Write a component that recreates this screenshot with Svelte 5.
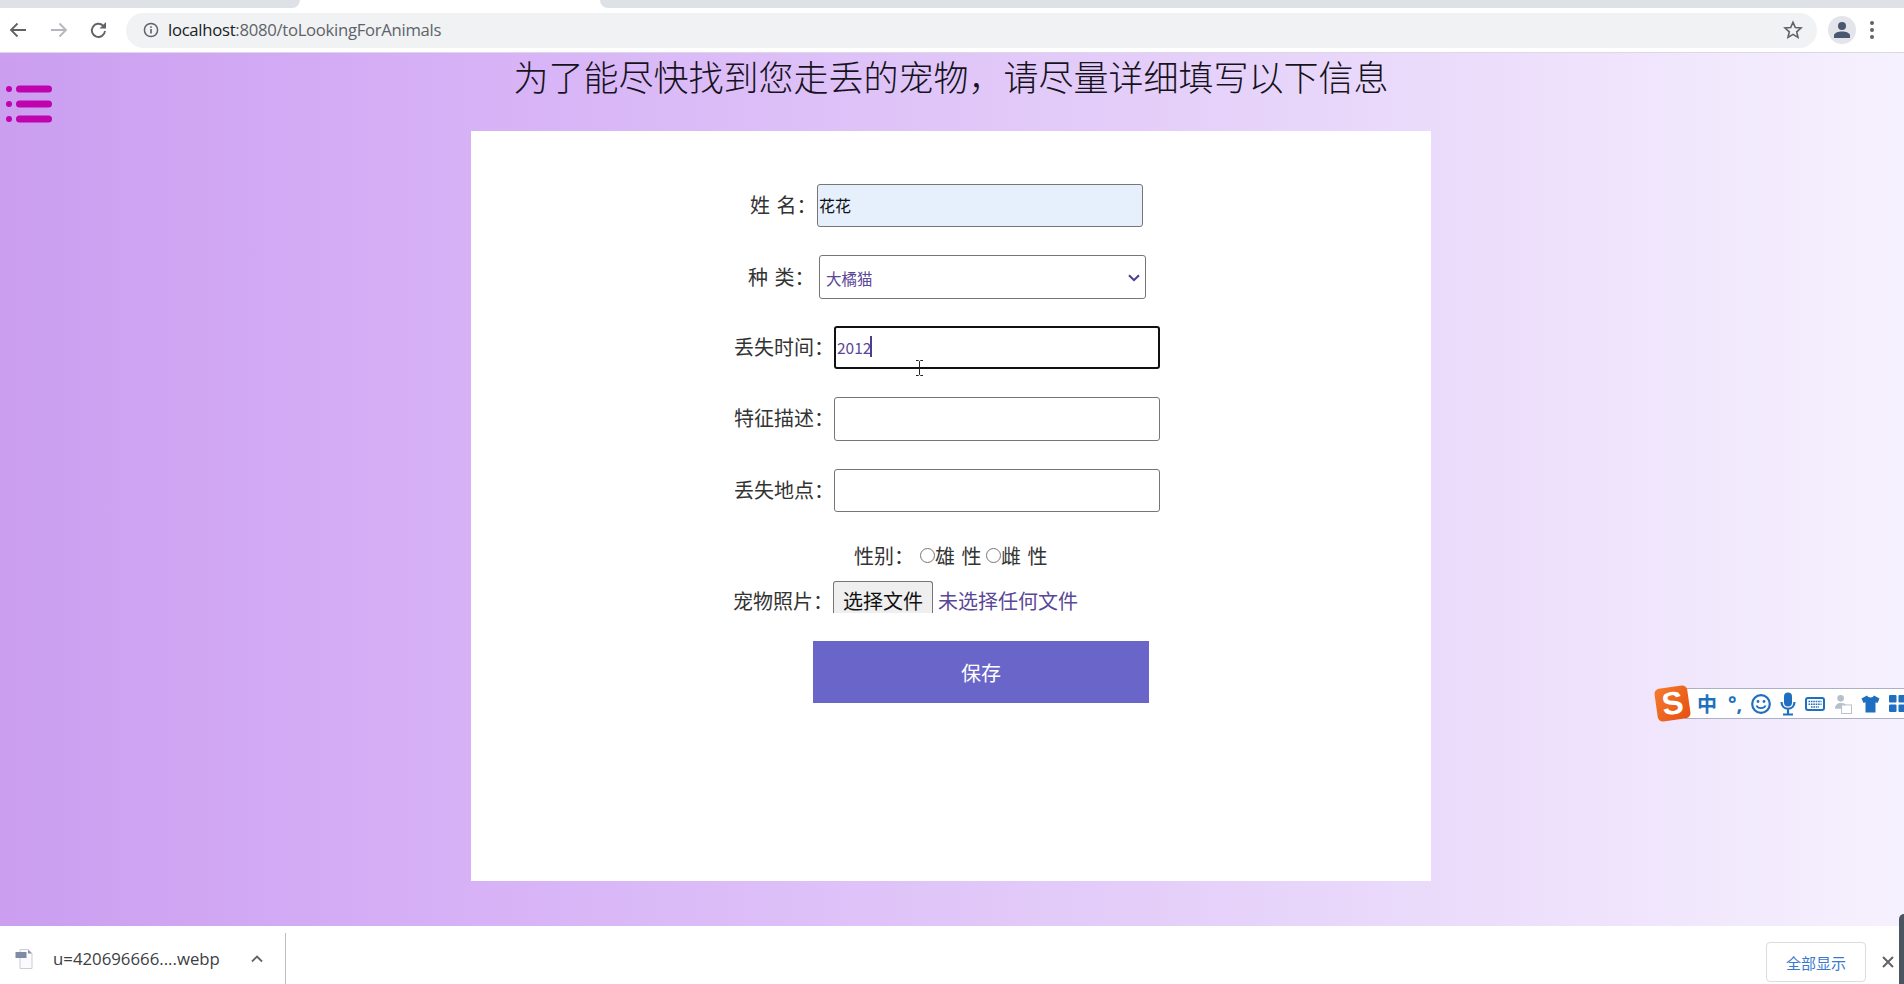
<script>
  const sogouBlue = '#1f6fc0';
</script>

<div class="window">
  <div class="tabstrip">
    <div class="tab-gray first"></div>
    <div class="tab-active"></div>
    <div class="tab-gray last"></div>
  </div>

  <header class="toolbar">
    <svg class="nav" width="20" height="20" viewBox="0 0 20 20"><path d="M18 10H3M9.500 3.500L3 10l6.500 6.500" fill="none" stroke="#5f6368" stroke-width="1.800"/></svg>
    <svg class="nav fwd" width="20" height="20" viewBox="0 0 20 20"><path d="M2 10h15M10.500 3.500L17 10l-6.500 6.500" fill="none" stroke="#b4b7bb" stroke-width="1.800"/></svg>
    <svg class="nav reload" width="20" height="20" viewBox="0 0 20 20"><path d="M16 11a6.600 6.600 0 1 1-1.900-5.300" fill="none" stroke="#5f6368" stroke-width="1.900"/><path d="M17 2v6.500h-6.500z" fill="#5f6368"/></svg>
    <div class="omnibox">
      <svg width="16" height="16" viewBox="0 0 16 16" class="info"><circle cx="8" cy="8" r="6.600" fill="none" stroke="#5f6368" stroke-width="1.500"/><rect x="7.200" y="7" width="1.600" height="4.500" fill="#5f6368"/><rect x="7.200" y="4.300" width="1.600" height="1.600" fill="#5f6368"/></svg>
      <span class="url"><span class="host">localhost</span>:8080/toLookingForAnimals</span>
      <svg class="star" width="20" height="20" viewBox="0 0 20 20"><path d="M10 2.300l2.300 5.200 5.700.5-4.300 3.800 1.300 5.600-5-3-5 3 1.300-5.600L2 8l5.700-.5z" fill="none" stroke="#5f6368" stroke-width="1.600"/></svg>
    </div>
    <div class="avatar">
      <svg width="18" height="18" viewBox="0 0 18 18"><circle cx="9" cy="5" r="4" fill="#4a5770"/><path d="M1 17v-2.500C1 12 5 10.500 9 10.500s8 1.500 8 4V17z" fill="#4a5770"/></svg>
    </div>
    <div class="dots"><i></i><i></i><i></i></div>
  </header>

  <main class="page">
    <svg class="menu" width="48" height="38" viewBox="0 0 48 38">
      <g fill="#bf03ae">
        <circle cx="3" cy="4" r="3"/><rect x="10" y="0.500" width="36" height="7" rx="3.500"/>
        <circle cx="3" cy="19" r="3"/><rect x="10" y="15.500" width="36" height="7" rx="3.500"/>
        <circle cx="3" cy="34" r="3"/><rect x="10" y="30.500" width="36" height="7" rx="3.500"/>
      </g>
    </svg>

    <h1>为了能尽快找到您走丢的宠物，请尽量详细填写以下信息</h1>

    <section class="card">
      <form class="form">
        <div class="row r-name">
          <label for="f-name">姓 名：</label>
          <input id="f-name" class="field autofill" value="花花" />
        </div>
        <div class="row r-kind">
          <label for="f-kind">种 类：</label>
          <div class="select-wrap">
            <select id="f-kind" class="field select"><option>大橘猫</option></select>
            <svg class="chev" width="12" height="8" viewBox="0 0 12 8"><path d="M1 1.200l5 5 5-5" fill="none" stroke="#4b3d8f" stroke-width="2"/></svg>
          </div>
        </div>
        <div class="row r-wide">
          <label for="f-time">丢失时间：</label>
          <div class="focus-wrap">
            <input id="f-time" class="field focused" value="2012" />
            <span class="caret"></span>
            <svg class="ibeam" width="9" height="16" viewBox="0 0 9 16"><path d="M1 .5h2.500l1 1 1-1H8M4.500 1.500v13M1 15.500h2.500l1-1 1 1H8" fill="none" stroke="#222" stroke-width="1"/></svg>
          </div>
        </div>
        <div class="row r-wide">
          <label for="f-desc">特征描述：</label>
          <input id="f-desc" class="field tall" />
        </div>
        <div class="row r-wide">
          <label for="f-place">丢失地点：</label>
          <input id="f-place" class="field" />
        </div>

        <div class="sex">
          <span class="sex-label">性别：</span>
          <input type="radio" name="sex" /><span class="opt">雄 性</span>
          <input type="radio" name="sex" /><span class="opt">雌 性</span>
        </div>

        <div class="file-row">
          <span class="file-label">宠物照片：</span>
          <span class="file-btn">选择文件</span>
          <span class="file-name">未选择任何文件</span>
        </div>

        <button type="button" class="save">保存</button>
      </form>
    </section>

    <aside class="sogou">
      <div class="sg-logo"><span>S</span></div>
      <div class="sg-bar">
        <span class="sg-zh">中</span>
        <span class="sg-punct">°,</span>
        <svg width="20" height="20" viewBox="0 0 20 20"><circle cx="10" cy="10" r="8.800" fill="none" stroke={sogouBlue} stroke-width="2.200"/><circle cx="7" cy="7.500" r="1.400" fill={sogouBlue}/><circle cx="13" cy="7.500" r="1.400" fill={sogouBlue}/><path d="M5.500 11.500c1.500 3.500 7.500 3.500 9 0" fill="none" stroke={sogouBlue} stroke-width="1.800"/></svg>
        <svg width="16" height="24" viewBox="0 0 16 24"><rect x="4" y="0.500" width="8" height="14" rx="4" fill={sogouBlue}/><path d="M1.500 10c0 9 13 9 13 0M8 17v5M3 22.500h10" fill="none" stroke={sogouBlue} stroke-width="2.200"/></svg>
        <svg width="20" height="14" viewBox="0 0 20 14"><rect x="1" y="1" width="18" height="12" rx="2" fill="none" stroke={sogouBlue} stroke-width="2"/><path d="M3.500 4.500h13M3.500 7.200h13M6 10h8" stroke={sogouBlue} stroke-width="1.600" stroke-dasharray="1.600 .8"/></svg>
        <svg width="18" height="20" viewBox="0 0 19 20"><circle cx="7" cy="4" r="3.500" fill="#b6bfca"/><path d="M1 15c0-4 3-6 6-6s5 1 6 2v4z" fill="#b6bfca"/><rect x="8" y="11" width="10.500" height="9" fill="#fff" stroke="#b6bfca"/></svg>
        <svg width="19" height="18" viewBox="0 0 19 18"><path d="M6 0.500L0.500 3.500l2 4.500 2-.8V17.500h10V7.200l2 .8 2-4.500L13 .5c-1 2.500-6 2.500-7 0z" fill={sogouBlue}/></svg>
        <svg width="17" height="17" viewBox="0 0 17 17" class="sg-grid"><rect x="0" y="0" width="7.500" height="7.500" rx="1" fill={sogouBlue}/><rect x="9.500" y="0" width="7.500" height="7.500" rx="1" fill={sogouBlue}/><rect x="0" y="9.500" width="7.500" height="7.500" rx="1" fill={sogouBlue}/><rect x="9.500" y="9.500" width="7.500" height="7.500" rx="1" fill={sogouBlue}/></svg>
      </div>
    </aside>
  </main>

  <footer class="downloads">
    <div class="dl-item">
      <svg width="18" height="20" viewBox="0 0 18 20"><path d="M5 .5h8l4 4v15H5z" fill="#fbfbfd" stroke="#c9cdd6"/><rect x="0.500" y="3" width="11" height="6" fill="#7d8ba6"/><path d="M13 .5v4h4" fill="#8a93a6"/></svg>
      <span class="dl-name">u=420696666....webp</span>
      <svg class="dl-chev" width="12" height="8" viewBox="0 0 12 8"><path d="M1 6.500l5-5 5 5" fill="none" stroke="#5f6368" stroke-width="1.800"/></svg>
    </div>
    <div class="dl-spacer"></div>
    <button type="button" class="show-all">全部显示</button>
    <svg class="dl-x" width="12" height="12" viewBox="0 0 12 12"><path d="M1 1l10 10M11 1L1 11" stroke="#5f6368" stroke-width="2"/></svg>
    <div class="edge"></div>
  </footer>
</div>

<style>
  :global(body) {
    margin: 0;
    overflow: hidden;
    font-family: "Noto Sans CJK SC", "Noto Sans", sans-serif;
  }
  .window {
    width: 1904px;
    height: 984px;
    display: flex;
    flex-direction: column;
    overflow: hidden;
  }
  .tabstrip {
    height: 8px;
    display: flex;
    flex: none;
    background: #fff;
  }
  .tab-gray { background: #dee1e6; }
  .tab-gray.first { width: 300px; border-bottom-right-radius: 8px; }
  .tab-active { width: 300px; background: #fff; }
  .tab-gray.last { flex: 1; border-bottom-left-radius: 8px; }

  .toolbar {
    height: 45px;
    flex: none;
    display: flex;
    align-items: center;
    background: #fff;
    border-bottom: 1px solid #dcd8e6;
    box-sizing: border-box;
    padding-left: 8px;
  }
  .nav { flex: none; }
  .fwd { margin-left: 21px; }
  .reload { margin-left: 20px; }
  .omnibox {
    margin-left: 17px;
    width: 1691px;
    height: 35px;
    flex: none;
    border-radius: 18px;
    background: #f0f2f4;
    display: flex;
    align-items: center;
    box-sizing: border-box;
    padding-left: 17px;
    padding-right: 14px;
  }
  .info { flex: none; }
  .url {
    margin-left: 9px;
    font: 16.700px/20px "Open Sans", sans-serif;
    letter-spacing: -0.290px;
    color: #5f6368;
    white-space: nowrap;
  }
  .host { color: #202124; }
  .star { margin-left: auto; }
  .avatar {
    margin-left: 11px;
    width: 28px;
    height: 28px;
    border-radius: 50%;
    background: #e3e5ea;
    display: flex;
    align-items: center;
    justify-content: center;
    flex: none;
  }
  .dots {
    margin-left: 14px;
    display: flex;
    flex-direction: column;
    gap: 3px;
  }
  .dots i {
    display: block;
    width: 4px;
    height: 4px;
    border-radius: 50%;
    background: #5f6368;
  }

  .page {
    flex: 1;
    position: relative;
    background: linear-gradient(to right, #cb9ef0 0%, #d5aef6 20%, #e4cef9 60%, #f6f1fe 100%);
    color: #222;
  }
  .menu { position: absolute; left: 6px; top: 32px; }
  h1 {
    margin: 0 0 0 -2px;
    height: 46px;
    line-height: 46px;
    padding-bottom: 32px;
    font-size: 35px;
    font-weight: 300;
    text-align: center;
    white-space: nowrap;
    color: #16131c;
  }
  .card {
    margin-left: 471px;
    width: 960px;
    height: 750px;
    background: #fff;
    box-sizing: border-box;
    padding-top: 53px;
  }
  .form { display: flex; flex-direction: column; }
  .row {
    display: flex;
    align-items: center;
    margin-bottom: 28px;
    font-size: 20px;
    color: #333;
  }
  .row label { flex: none; line-height: 26px; padding-bottom: 2px; }
  .r-name { padding-left: 279px; word-spacing: 2px; }
  .r-name label { width: 67px; }
  .r-kind { padding-left: 277px; margin-bottom: 27px; word-spacing: 2px; }
  .r-kind label { width: 71px; padding-bottom: 0; }
  .r-wide { padding-left: 263px; }
  .r-wide label { width: 100px; }

  .field {
    box-sizing: border-box;
    width: 326px;
    height: 43px;
    border: 1px solid #767676;
    border-radius: 3px;
    background: #fff;
    padding: 0 1px 1px;
    font: 15.500px "Noto Sans CJK SC", sans-serif;
    color: #5a4796;
    outline: none;
    margin: 0;
    display: block;
  }
  .tall { height: 44px; }
  .autofill { background: #e6f0fd; color: #111; font-size: 16px; }
  .select-wrap { position: relative; }
  .select {
    width: 327px;
    height: 44px;
    appearance: none;
    padding: 2px 0 0 6px;
  }
  .chev { position: absolute; right: 6px; top: 19px; pointer-events: none; }
  .focus-wrap { position: relative; }
  .focused { border: 2px solid #111; padding: 0 1px 2px; }
  .caret {
    position: absolute;
    left: 36px;
    top: 10px;
    width: 2px;
    height: 21px;
    background: #4b3d8f;
  }
  .ibeam { position: absolute; left: 81px; top: 34px; }

  .sex {
    display: flex;
    align-items: center;
    height: 26px;
    margin-top: 2px;
    padding-left: 383px;
    font-size: 20px;
    color: #333;
    word-spacing: 2px;
  }
  .sex-label { width: 66px; }
  .sex input {
    width: 15px;
    height: 15px;
    margin: 0;
    flex: none;
  }
  .opt { width: 51px; white-space: pre; }

  .file-row {
    display: flex;
    align-items: flex-start;
    height: 32px;
    margin-top: 13px;
    padding-left: 262px;
    font-size: 20px;
    color: #333;
  }
  .file-label {
    width: 100px;
    flex: none;
    box-sizing: border-box;
    padding-top: 7px;
    line-height: 25px;
  }
  .file-btn {
    flex: none;
    box-sizing: border-box;
    width: 100px;
    height: 32px;
    background: #efefef;
    border: 1px solid #767676;
    border-bottom: none;
    border-radius: 3px 3px 0 0;
    text-align: center;
    font-size: 20px;
    padding-top: 6px;
    line-height: 25px;
    color: #111;
  }
  .file-name {
    margin-left: 5px;
    font-size: 20px;
    padding-top: 7px;
    line-height: 25px;
    color: #5a4796;
    white-space: nowrap;
  }
  .save {
    margin-top: 28px;
    margin-left: 342px;
    width: 336px;
    height: 62px;
    background: #6a65c9;
    border: none;
    color: #fff;
    font: 20px "Noto Sans CJK SC", sans-serif;
    padding: 0;
  }

  .sogou {
    position: absolute;
    left: 1656px;
    top: 634px;
    display: flex;
    align-items: center;
  }
  .sg-logo {
    width: 33px;
    height: 33px;
    background: linear-gradient(135deg, #f47c2c, #e64f14);
    border-radius: 5px;
    transform: rotate(-8deg);
    display: flex;
    align-items: center;
    justify-content: center;
    color: #fff;
    font: 900 32px/33px "Liberation Sans", sans-serif;
    z-index: 1;
    flex: none;
  }
  .sg-bar {
    margin-left: -4px;
    width: 219px;
    height: 31px;
    box-sizing: border-box;
    background: #fff;
    border: 1px solid #abb0c6;
    border-right: none;
    display: flex;
    align-items: center;
    gap: 9px;
    padding-left: 11px;
    overflow: hidden;
  }
  .sg-zh { font: 700 20px/1 "Noto Sans CJK SC", sans-serif; color: #1f6fc0; }
  .sg-punct { font: 700 20px/1 "Noto Sans", sans-serif; color: #1f6fc0; width: 15px; margin-left: 2px; }
  .sg-bar svg { flex: none; }

  .downloads {
    height: 58px;
    flex: none;
    background: #fff;
    display: flex;
    align-items: center;
    position: relative;
    padding-left: 15px;
    box-sizing: border-box;
  }
  .dl-item {
    display: flex;
    align-items: center;
    width: 271px;
    height: 51px;
    margin-top: 7px;
    border-right: 1px solid #bdbdbd;
    box-sizing: border-box;
  }
  .dl-name {
    margin-left: 20px;
    font: 16.800px "Open Sans", sans-serif;
    color: #3c4043;
    white-space: nowrap;
  }
  .dl-chev { margin-left: 31px; }
  .dl-spacer { flex: 1; }
  .show-all {
    width: 100px;
    height: 40px;
    margin-top: 14px;
    background: #fff;
    border: 1px solid #dadce0;
    border-radius: 4px;
    color: #3b78d0;
    font: 15px "Noto Sans CJK SC", sans-serif;
    padding: 0;
  }
  .dl-x { margin-left: 16px; margin-right: 10px; margin-top: 14px; }
  .edge {
    position: absolute;
    right: 0;
    top: -12px;
    bottom: 0;
    width: 5px;
    background: #4a5560;
    border-top-left-radius: 5px;
  }
</style>
